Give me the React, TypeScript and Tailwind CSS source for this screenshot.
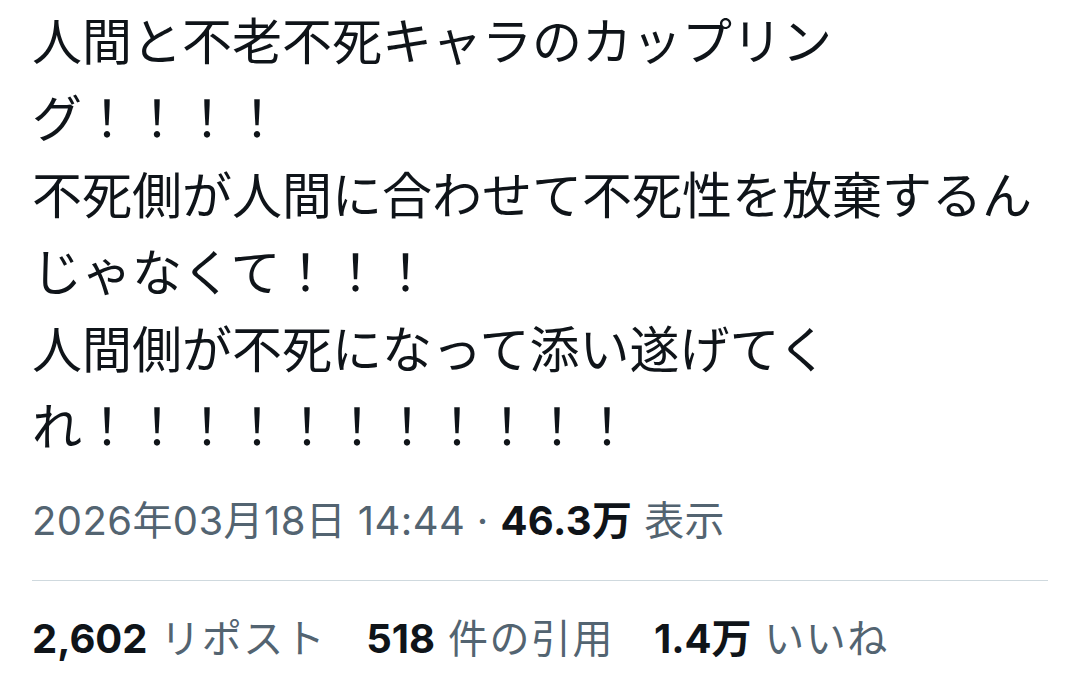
const lines = [
  "人間と不老不死キャラのカップリング！！！！",
  "不死側が人間に合わせて不死性を放棄するんじゃなくて！！！",
  "人間側が不死になって添い遂げてくれ！！！！！！！！！！！",
];

function Stat({ value, label }: { value: string; label: string }) {
  return (
    <span className="whitespace-nowrap">
      <span className="font-bold text-[#0f1419]">{value}</span>
      <span className="text-[#536471] tracking-[1.5px]"> {label}</span>
    </span>
  );
}

export default function App() {
  return (
    <div className="bg-white w-[1080px] h-[677px] overflow-hidden pl-8 pr-8 font-['Inter','Noto_Sans_CJK_JP',sans-serif]">
      <div className="text-[50px] leading-[77px] text-[#0f1419] font-['Noto_Sans_CJK_JP',sans-serif]">
        {lines.map((l, i) => (
          <div key={i}>{l}</div>
        ))}
      </div>

      <div className="mt-[35px] text-[40px] leading-[48px] text-[#536471] whitespace-nowrap tracking-[0.4px]">
        2026年03月18日 14:44 · <span className="font-bold text-[#0f1419]">46.3万</span> 表示
      </div>

      <div className="mt-[35px] h-px bg-[#cfd9de]" />

      <div className="mt-[34px] flex gap-[40px] text-[40px] leading-[48px]">
        <Stat value="2,602" label="リポスト" />
        <Stat value="518" label="件の引用" />
        <Stat value="1.4万" label="いいね" />
      </div>
    </div>
  );
}
